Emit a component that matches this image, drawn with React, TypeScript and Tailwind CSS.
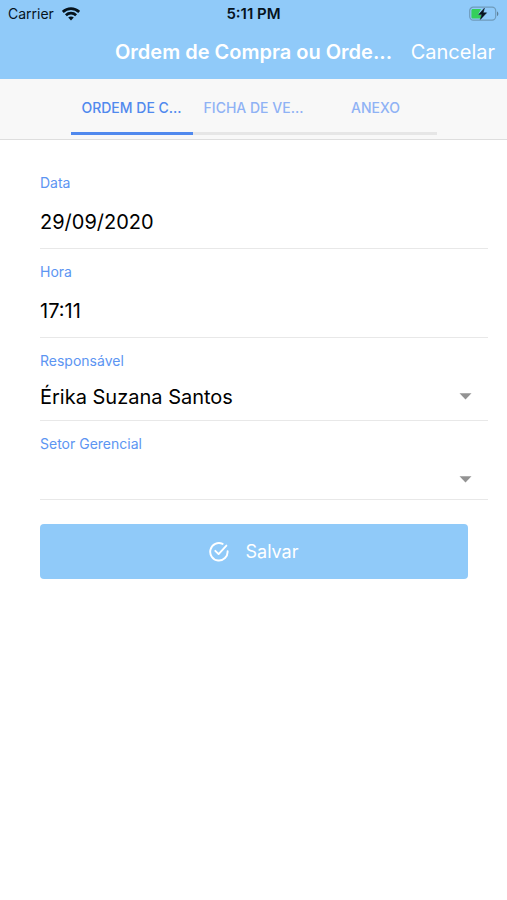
import { useState } from "react";

const tabs = ["ORDEM DE C...", "FICHA DE VE...", "ANEXO"];

function WifiIcon() {
  return (
    <svg width="18" height="14" viewBox="0 0 18 14" fill="none" stroke="#06131d" strokeWidth="2.7" aria-hidden="true">
      <path d="M0.8 4.9C5.4 0.5 12.6 0.5 17.2 4.9" />
      <path d="M3.9 8.3C6.8 5.5 11.2 5.5 14.1 8.3" />
      <path d="M9 13.4L6.2 10.6C7.8 9.2 10.2 9.2 11.8 10.6Z" fill="#06131d" stroke="none" />
    </svg>
  );
}

function BatteryIcon() {
  return (
    <svg width="30" height="16" viewBox="0 0 30 16" fill="none" aria-hidden="true">
      <rect x="0.7" y="1.2" width="26" height="13" rx="3.6" stroke="#6f9bbb" strokeWidth="1.2" />
      <path d="M28 5.4C29.8 6 29.8 9.4 28 10Z" fill="#5d8098" />
      <path d="M4 3H12L9 9H12V12.6H4C3 12.6 2.4 12 2.4 11V4.6C2.4 3.6 3 3 4 3Z" fill="#35cf5b" />
      <path d="M15.4 2.2L9.6 8.6H12.8L11.4 13.4L17.6 6.8H14.2Z" fill="#06131d" stroke="#06131d" strokeWidth="0.5" />
    </svg>
  );
}

function CheckIcon() {
  return (
    <svg width="20" height="20" viewBox="0 0 20 20" fill="none" stroke="#fff" strokeWidth="1.9" strokeLinecap="round" strokeLinejoin="round" aria-hidden="true">
      <path d="M13.6 1.9A8.7 8.7 0 1 0 18.6 9.2" />
      <path d="M6.3 8.8L9.6 12.1L17.4 3.6" />
    </svg>
  );
}

function TextField({ id, label, value }: { id: string; label: string; value: string }) {
  return (
    <div className="flex flex-col pt-[13px] border-b border-[#e8e8e8]">
      <label htmlFor={id} className="text-sm leading-5 text-[#5c95f2]">
        {label}
      </label>
      <input id={id} type="text" defaultValue={value} className="w-full h-[55px] pt-[3px] text-xl text-black bg-transparent outline-none" />
    </div>
  );
}

function SelectField({ id, label, value, className }: { id: string; label: string; value: string; className: string }) {
  return (
    <div className="relative flex flex-col pt-[13px] border-b border-[#e8e8e8]">
      <label htmlFor={id} className="text-sm leading-5 text-[#5c95f2]">
        {label}
      </label>
      <select id={id} defaultValue={value} className={`w-full pt-[3px] pr-10 text-xl text-black bg-transparent appearance-none outline-none ${className}`}>
        <option value={value}>{value}</option>
      </select>
      <svg className="absolute right-4 top-[55px] pointer-events-none" width="13" height="7" viewBox="0 0 13 7" fill="#939393" aria-hidden="true">
        <path d="M0.5 0.3H12.5L6.5 6.5Z" />
      </svg>
    </div>
  );
}

export default function App() {
  const [active, setActive] = useState(0);

  return (
    <div className="min-h-screen bg-white font-['Inter',sans-serif]">
      <header className="bg-[#90caf9]">
        <div className="grid grid-cols-3 items-center h-7 px-2 text-sm text-[#06131d]">
          <div className="flex items-center gap-2">
            <span>Carrier</span>
            <WifiIcon />
          </div>
          <span className="text-center text-[15px] font-semibold">5:11 PM</span>
          <div className="flex justify-end">
            <BatteryIcon />
          </div>
        </div>
        <div className="grid grid-cols-[1fr_auto_1fr] items-center h-[51px] pb-1 px-3 text-xl text-white">
          <h1 className="col-start-2 font-semibold whitespace-nowrap">Ordem de Compra ou Orde...</h1>
          <button type="button" className="justify-self-end">
            Cancelar
          </button>
        </div>
      </header>

      <nav className="flex justify-center h-[61px] pb-1 bg-[#f8f8f8] border-b border-[#dedede]">
        {tabs.map((tab, i) => (
          <button
            key={tab}
            type="button"
            onClick={() => setActive(i)}
            className={`w-[122px] pt-[5px] text-sm font-medium whitespace-nowrap border-b-3 ${
              active === i ? "text-[#5089ee] border-[#5089ee]" : "text-[#8fb2f5] border-[#e6e6e6]"
            }`}
          >
            {tab}
          </button>
        ))}
      </nav>

      <form className="pt-5 pl-10 pr-[19px]" onSubmit={(e) => e.preventDefault()}>
        <TextField id="data" label="Data" value="29/09/2020" />
        <TextField id="hora" label="Hora" value="17:11" />
        <SelectField id="responsavel" label="Responsável" value="Érika Suzana Santos" className="h-[49px]" />
        <SelectField id="setor" label="Setor Gerencial" value="" className="h-[45px]" />
        <div className="pt-6 pr-5">
          <button type="submit" className="flex items-center justify-center gap-4 w-full h-[55px] rounded bg-[#90caf9] text-lg text-white">
            <CheckIcon />
            Salvar
          </button>
        </div>
      </form>
    </div>
  );
}
